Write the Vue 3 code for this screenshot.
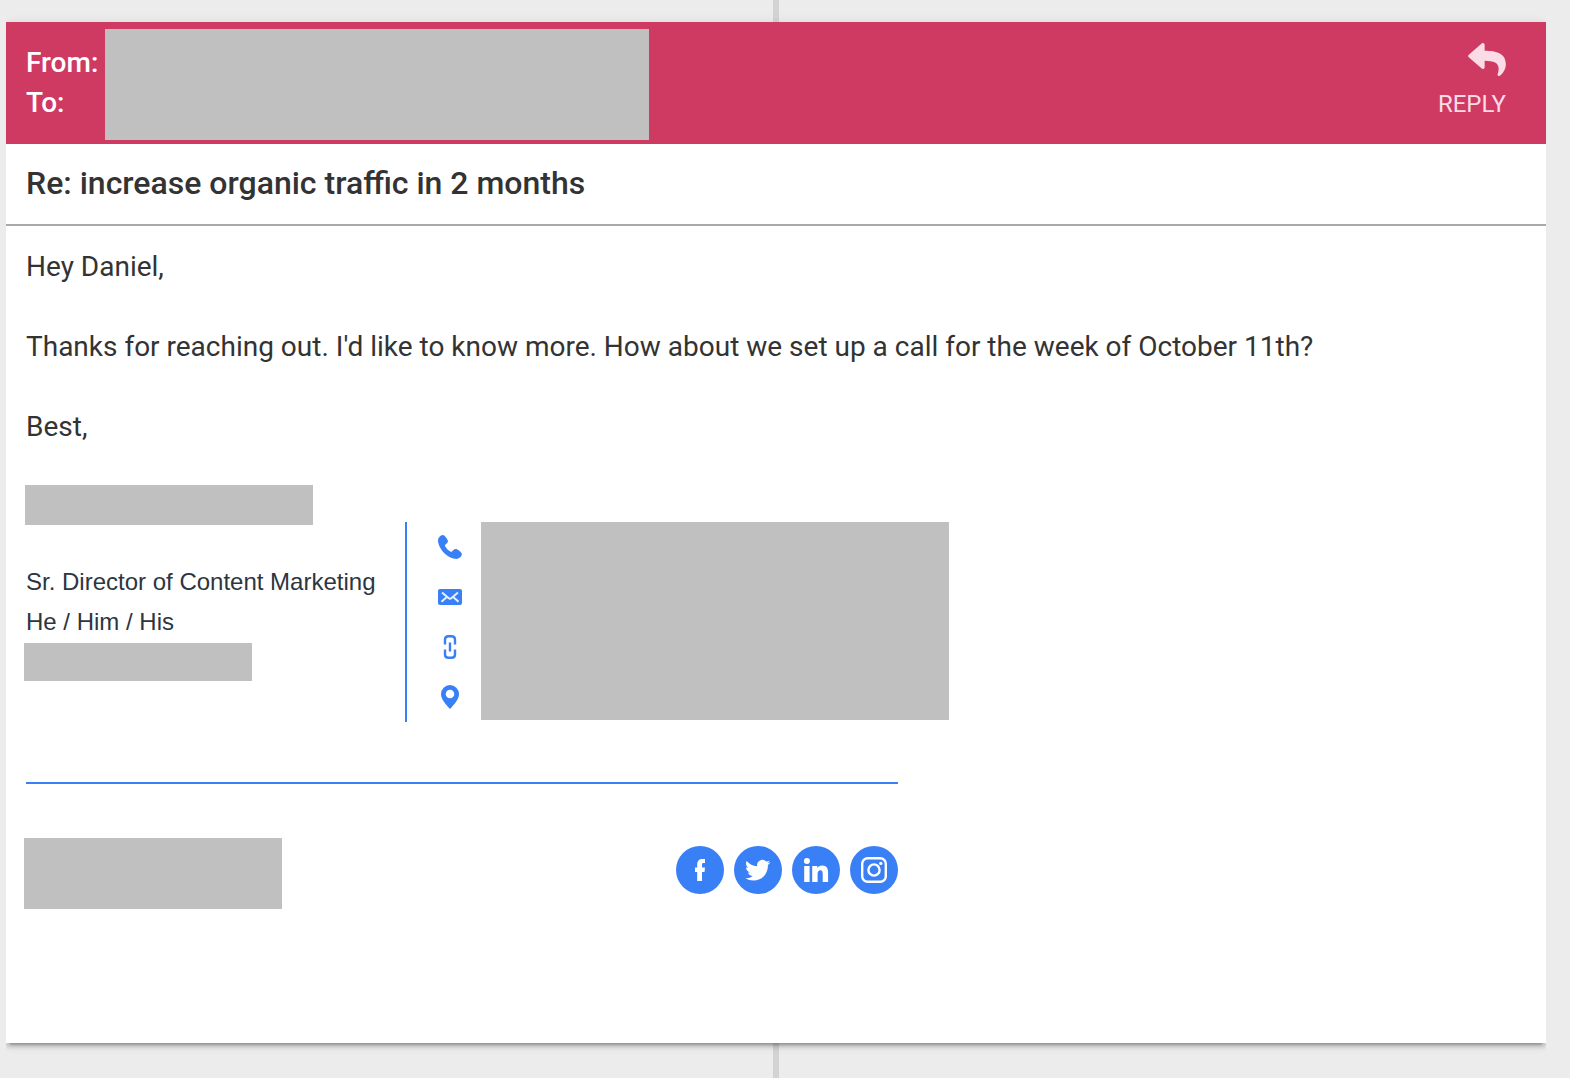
<script setup>
const social = [
  {
    name: 'Facebook',
    path: 'M21.200 35V26H19V21.600h2.200v-3c0-3.600 2-5.600 5-5.600h2.800v4h-1.500c-1.200 0-1.500.7-1.500 1.600v3H29l-.5 4.400H26V35z'
  },
  {
    name: 'Twitter',
    path: 'M36.500 16.200c-.9.400-1.900.7-2.900.8 1-.6 1.500-1.500 1.900-2.600-1 .6-2 1-3.200 1.200a5.300 5.300 0 0 0-9.100 4.700c-4.300-.2-8-2.200-10.500-5.300-1.300 2.300-.7 5.200 1.600 6.800-.8 0-1.600-.2-2.300-.6 0 2.500 1.700 4.700 4.200 5.200-.7.200-1.500.2-2.300.1.700 2 2.600 3.500 4.900 3.600a10.500 10.500 0 0 1-7.500 2.200 15 15 0 0 0 8 2.300c9.500 0 15-8 14.600-15.700 1-.7 1.900-1.600 2.600-2.700z'
  },
  {
    name: 'LinkedIn',
    path: 'M12.200 20h5.400V36h-5.400zM14.900 12a3 3 0 1 1 0 6 3 3 0 0 1 0-6zM20.200 20h5.100v2.200c.8-1.500 2.500-2.600 4.800-2.600 4.700 0 6 3 6 7.500V36h-5.400v-7.700c0-2.200-.2-4-2.300-4s-2.800 1.700-2.800 3.900V36h-5.400z'
  },
  { name: 'Instagram', path: '' }
]
</script>

<template>
  <main class="page">
    <div class="thread">
      <div class="connector"></div>
      <article class="card">
        <header class="head">
          <dl class="people">
            <dt>From:</dt>
            <dt>To:</dt>
          </dl>
          <div class="redacted people-hidden"></div>
          <button class="reply" type="button">
            <svg viewBox="0 32 512 448" aria-hidden="true">
              <path d="M8.309 189.836L184.313 37.851C199.719 24.546 224 35.347 224 56.015v80.053c160.629 1.839 288 34.032 288 186.258 0 61.441-39.581 122.309-83.333 154.132-13.653 9.931-33.111-2.533-28.077-18.631 45.344-145.012-21.507-183.510-176.590-185.742V360c0 20.700-24.300 31.453-39.687 18.164l-176.004-152c-11.071-9.562-11.086-26.753 0-36.328z" />
            </svg>
            <span>REPLY</span>
          </button>
        </header>

        <h1 class="subject">Re: increase organic traffic in 2 months</h1>

        <div class="body">
          <p>Hey Daniel,</p>
          <p>Thanks for reaching out. I'd like to know more. How about we set up a call for the week of October 11th?</p>
          <p>Best,</p>
          <div class="redacted name-hidden"></div>

          <section class="signature">
            <div class="details">
              <div class="role">
                <div>Sr. Director of Content Marketing</div>
                <div>He / Him / His</div>
                <div class="redacted company-hidden"></div>
              </div>
              <div class="contact">
                <ul class="contact-icons">
                  <li>
                    <svg viewBox="0 0 24 24" role="img" aria-label="Phone">
                      <path d="M1.200 2.200C2.600.7 4.400-.3 5.700.3 7 1 8.800 3.600 9.700 5.200c.8 1.500-.4 2.800-2.400 4.500-.5.400-.4 1 0 1.700 1.300 2.200 2.900 3.800 5 5.100.7.400 1.200.5 1.700 0 1.500-1.900 3-3.100 4.400-2.400 1.700.9 4.300 2.700 5.100 3.900.9 1.500-.2 3.200-1.700 4.600-1.200 1.200-3.100 1.600-5.200 1.200C8.900 22.300 1.900 15.300.2 7.500-.2 5.400 0 3.400 1.200 2.200z" />
                    </svg>
                  </li>
                  <li>
                    <svg viewBox="0 0 24 24" role="img" aria-label="Email">
                      <rect x="0" y="4" width="24" height="16" rx="2" />
                      <path class="cut" d="M4 7.500l6.500 5.500q1.500 1.200 3 0L20 7.500M3.500 16.700l5-4.500M20.500 16.700l-5-4.500" />
                    </svg>
                  </li>
                  <li>
                    <svg viewBox="0 0 24 24" role="img" aria-label="Website">
                      <path class="line" d="M7 9.500V4.500Q7 1.200 10.500 1.200h3Q17 1.200 17 4.500v5M7 14.500v5Q7 22.800 10.500 22.800h3q3.500 0 3.500-3.300v-5M12 7.500v9" />
                    </svg>
                  </li>
                  <li>
                    <svg viewBox="0 0 24 24" role="img" aria-label="Address">
                      <path fill-rule="evenodd" d="M12 0a9 9 0 0 1 9 9c0 5-4.500 10-9 15C7.500 19 3 14 3 9a9 9 0 0 1 9-9zm0 4.700a4.300 4.300 0 1 0 0 8.600 4.300 4.300 0 0 0 0-8.600z" />
                    </svg>
                  </li>
                </ul>
                <div class="redacted contact-hidden"></div>
              </div>
            </div>

            <div class="links">
              <div class="redacted logo-hidden"></div>
              <nav class="social" aria-label="Social profiles">
                <a v-for="item in social" :key="item.name" href="#" :aria-label="item.name">
                  <svg viewBox="0 0 48 48" aria-hidden="true">
                    <path v-if="item.path" :d="item.path" />
                    <template v-else>
                      <rect class="ring" x="12.200" y="12.200" width="23.600" height="23.600" rx="5.500" />
                      <circle class="ring" cx="24" cy="24" r="5.600" />
                      <circle cx="30.800" cy="17.400" r="1.700" />
                    </template>
                  </svg>
                </a>
              </nav>
            </div>
          </section>
        </div>
      </article>
      <div class="connector grow"></div>
    </div>
  </main>
</template>

<style>
body {
  margin: 0;
  background: #ececec;
}
</style>

<style scoped>
.page {
  box-sizing: border-box;
  min-height: 100vh;
  display: flex;
  padding: 0 24px 0 6px;
  background: #ececec;
  color: #333;
  font-family: Roboto, sans-serif;
  font-size: 28px;
  line-height: 40px;
}

.thread {
  flex: 1;
  min-width: 0;
  display: flex;
  flex-direction: column;
  overflow: hidden;
}

.connector {
  width: 6px;
  height: 22px;
  align-self: center;
  background: #d3d3d3;
}

.connector.grow {
  flex: 1;
  min-height: 22px;
  height: auto;
}

.card {
  position: relative;
  background: #fff;
  box-shadow:
    0 6px 2px -4px rgba(0, 0, 0, 0.2),
    0 4px 4px rgba(0, 0, 0, 0.14),
    0 2px 10px rgba(0, 0, 0, 0.12);
}

.redacted {
  background: #c0c0c0;
}

.head {
  display: flex;
  padding: 0 40px 0 20px;
  background: #cf3a63;
  color: #fff;
}

.people {
  width: 79px;
  margin: 0;
  padding: 21px 0;
  font-weight: 500;
}

.people-hidden {
  width: 544px;
  margin: 7px 0 4px;
}

.reply {
  display: flex;
  flex-direction: column;
  align-items: flex-end;
  gap: 8px;
  margin-left: auto;
  padding: 21px 0 0;
  border: 0;
  background: none;
  color: #fbdbe6;
  font: 24px/40px Roboto, sans-serif;
  cursor: pointer;
}

.reply svg {
  width: 38px;
  height: 33px;
  fill: currentColor;
}

.subject {
  margin: 0;
  padding: 19px 20px 21px;
  border-bottom: 2px solid #a9a9a9;
  font-size: 32px;
  line-height: 40px;
  font-weight: 500;
}

.body {
  padding: 21px 20px 134px;
}

.body p {
  margin: 0 0 40px;
}

.body .redacted {
  margin-left: -2px;
}

.body .name-hidden {
  width: 288px;
  height: 40px;
  margin: -2px 0 -3px -1px;
}

.signature {
  max-width: 872px;
  color: #2d3640;
  font-family: "Liberation Sans", Arial, sans-serif;
  font-size: 24px;
}

.details {
  display: flex;
  padding-bottom: 60px;
  border-bottom: 2px solid #397ff6;
}

.role {
  flex: 0 0 379px;
  padding-top: 40px;
}

.company-hidden {
  width: 228px;
  height: 38px;
  margin-top: 1px;
}

.contact {
  display: flex;
  gap: 21px;
  padding-left: 31px;
  border-left: 2px solid #397ff6;
}

.contact-icons {
  display: flex;
  flex-direction: column;
  gap: 26px;
  margin: 0;
  padding: 13px 0;
  list-style: none;
}

.contact-icons li,
.contact-icons svg {
  display: block;
  width: 24px;
  height: 24px;
}

.contact-icons svg {
  fill: #397ff6;
}

.contact-icons .cut {
  fill: none;
  stroke: #e6effe;
  stroke-width: 2;
}

.contact-icons .line {
  fill: none;
  stroke: #397ff6;
  stroke-width: 2.4;
}

.contact-hidden {
  flex: none;
  width: 468px;
  height: 198px;
}

.links {
  display: flex;
  justify-content: space-between;
  padding-top: 54px;
}

.logo-hidden {
  width: 258px;
  height: 71px;
}

.social {
  display: flex;
  gap: 10px;
  padding-top: 8px;
}

.social a {
  width: 48px;
  height: 48px;
  border-radius: 50%;
  background: #397ff6;
}

.social svg {
  display: block;
  fill: #fff;
}

.social .ring {
  fill: none;
  stroke: #fff;
  stroke-width: 2.4;
}
</style>
